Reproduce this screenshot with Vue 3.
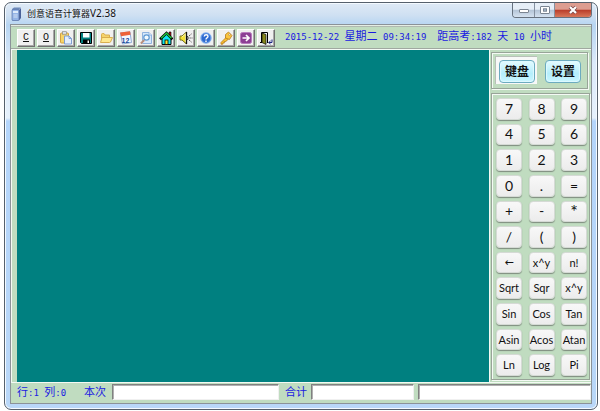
<script setup>
import { ref } from 'vue'

const tools = [
  { id: 'clear', label: 'C' },
  { id: 'zero', label: 'O' },
  { id: 'paste' }, { id: 'save' }, { id: 'open' }, { id: 'date' }, { id: 'find' },
  { id: 'home' }, { id: 'sound' }, { id: 'help' }, { id: 'key' }, { id: 'go' }, { id: 'exit' },
]

const keys = [
  '7', '8', '9', '4', '5', '6', '1', '2', '3', '0', '.', '=', '+', '-', '*', '/', '(', ')',
  '←', 'x^y', 'n!', 'Sqrt', 'Sqr', 'x^y', 'Sin', 'Cos', 'Tan', 'Asin', 'Acos', 'Atan', 'Ln', 'Log', 'Pi',
]

const tab = ref('keys')
const text = ref('')
</script>

<template>
  <div class="page">
    <main class="window">
      <header class="titlebar">
        <svg class="app-icon" viewBox="0 0 12 14">
          <path d="M2 2 4 .5h7l-2 2v11L7.500 13.500H2z" fill="#6d88b8" />
          <path d="M9 3l2-2v10l-2 2.500z" fill="#49619a" />
          <rect x="2" y="2.500" width="7" height="11" rx="1" fill="#94b4e6" stroke="#5c76aa" stroke-width=".7" />
          <rect x="3" y="4" width="5" height="2" fill="#dceafb" />
          <path d="M3.500 8h4M3.500 10h4" stroke="#d2e0f4" />
        </svg>
        <h1 class="title"><span class="cjk">创意语音计算器</span>V2.38</h1>
        <div class="winbtns">
          <button class="wb min" aria-label="最小化">
            <svg viewBox="0 0 12 10"><rect x="1.500" y="4.500" width="9" height="3" rx=".5" fill="#fff" stroke="#7b8592" /></svg>
          </button>
          <button class="wb max" aria-label="最大化">
            <svg viewBox="0 0 12 10"><rect x="1.500" y="1.500" width="9" height="7" rx=".5" fill="#fff" stroke="#7b8592" /><rect x="4.500" y="3.800" width="3" height="2.400" fill="#a9bdd1" stroke="#7b8592" /></svg>
          </button>
          <button class="wb close" aria-label="关闭">
            <svg viewBox="0 0 12 10"><path d="M3 2l6 6M9 2L3 8" stroke="#7d4a4a" stroke-width="3.800" /><path d="M3 2l6 6M9 2L3 8" stroke="#fff" stroke-width="2.200" /></svg>
          </button>
        </div>
      </header>

      <div class="client">
        <div class="toolbar">
          <button v-for="t in tools" :key="t.id" class="tool" :aria-label="t.label || t.id">
            <u v-if="t.label">{{ t.label }}</u>
            <svg v-else viewBox="0 0 14 14">
              <template v-if="t.id === 'paste'">
                <rect x="1.500" y="2" width="8" height="10" rx="1" fill="#f6d469" stroke="#d3a140" />
                <rect x="3.500" y=".7" width="4" height="2.500" fill="#dfe3ea" stroke="#8a8a85" stroke-width=".7" />
                <path d="M5.500 5h4.500L12.500 7.500v5.500h-7z" fill="#e4eefc" stroke="#7f9fd2" />
                <path d="M10 5v2.500h2.500" fill="none" stroke="#7f9fd2" />
              </template>
              <template v-else-if="t.id === 'save'">
                <path d="M1.500 1.500h11v11h-10l-1-1z" fill="#048080" stroke="#000" />
                <rect x="4" y="2" width="6.500" height="4.500" fill="#fff" />
                <rect x="4" y="8.500" width="7" height="4" fill="#000" />
                <rect x="8.500" y="9.500" width="1.500" height="2.500" fill="#fff" />
              </template>
              <template v-else-if="t.id === 'open'">
                <path d="M2.500 11V3.500q0-1 1-1H5l1 1.500h4.500V7" fill="#f5d36c" stroke="#d9ae50" />
                <path d="M1.500 11.500L3 6.500h10.500l-2 4.500q-.3.500-1 .5z" fill="#ffe88f" stroke="#d9ae50" />
              </template>
              <template v-else-if="t.id === 'date'">
                <path d="M1.500 2L11 .8l1.500 10.700-9 1.500z" fill="#f4f8fe" stroke="#8fabd6" />
                <path d="M1 1.500L11 .3l.6 3.500L2 5.200z" fill="#ee6338" />
                <text x="2.500" y="11.500" class="cal">12</text>
              </template>
              <template v-else-if="t.id === 'find'">
                <path d="M3.500 1.500H10L12.500 4v8.500h-9z" fill="#d7e8fb" stroke="#8fb2de" />
                <path d="M10 1.500V4h2.500" fill="#fff" stroke="#8fb2de" />
                <circle cx="7.500" cy="6.500" r="2.700" fill="#f3faff" stroke="#5f98d2" stroke-width="1.200" />
                <path d="M5.300 9l-3.500 3.500" stroke="#b98f7c" stroke-width="1.800" />
              </template>
              <template v-else-if="t.id === 'home'">
                <path d="M10 1h2v4h-2z" fill="#b01818" stroke="#000" stroke-width=".6" />
                <path d="M3 7v6.500h9V7L7.500 3z" fill="#10e6ee" stroke="#000" />
                <path d="M1 8.300L7.500 2 13.500 8.300" fill="none" stroke="#000" stroke-width="2.600" />
                <path d="M2 7.300L7.500 2.200l5 5.100" fill="none" stroke="#22c43a" stroke-width="1.400" />
                <rect x="6" y="9" width="3" height="4.500" fill="#ffe32d" stroke="#000" stroke-width=".8" />
              </template>
              <template v-else-if="t.id === 'sound'">
                <path d="M1 5h2L7.500 1v12L3 9H1z" fill="#f3e233" stroke="#77701c" />
                <path d="M3 6l3.500-3v8" fill="none" stroke="#fff8a8" />
                <path d="M7.500 1v12" stroke="#111" stroke-width="1.300" />
                <path d="M8.500 5q1.300 2 0 4" fill="none" stroke="#222" />
                <path d="M10 5l3-2.500M10.500 7h3M10 9l3 2.500" stroke="#555" stroke-dasharray="1.300 .7" />
              </template>
              <template v-else-if="t.id === 'help'">
                <circle cx="7" cy="7" r="6" fill="#b9d4f7" />
                <circle cx="7" cy="7" r="4.900" fill="#2d6ad0" stroke="#6b9ce6" />
                <path d="M5.200 5.500q.2-1.800 2-1.800t1.800 1.600q0 1-1 1.500T7 8.500M7 9.500V11" fill="none" stroke="#fff" stroke-width="1.400" />
              </template>
              <template v-else-if="t.id === 'key'">
                <path d="M7.500 6L2 11.500v1.700h1.800V12h1.500v-1.500h1.500L9.500 8" fill="#f9c02f" stroke="#b5781a" stroke-width=".8" />
                <path d="M6.500 3.500L9.500 1l3.500 3.500-2.500 4-4-1.500z" fill="#fbc63e" stroke="#b5781a" stroke-width=".8" stroke-linejoin="round" />
                <circle cx="10.500" cy="3.700" r=".9" fill="#fff" stroke="#a66c10" stroke-width=".5" />
              </template>
              <template v-else-if="t.id === 'go'">
                <rect x="1.500" y="1.500" width="11" height="11" rx="2" fill="#8c3f94" stroke="#b87abd" />
                <path d="M3.500 7h6M7 4l3 3-3 3" fill="none" stroke="#fff" stroke-width="1.700" />
              </template>
              <template v-else>
                <path d="M2.500 11.500v-10h6v10" fill="#fff" stroke="#000" />
                <path d="M3 2l4 1.500V13.500L3 11.500z" fill="#87871c" stroke="#000" stroke-width=".7" />
                <path d="M1 11.500h2M8 11.500h1.500" stroke="#000" />
                <path d="M13 8.500v3h-3M11.500 10l-1.700 1.600 1.700 1.400" fill="none" stroke="#1b2483" />
              </template>
            </svg>
          </button>
          <p class="info mono">2015-12-22 <b>星期二</b> 09:34:19&nbsp; <b>距高考</b>:182 <b>天</b> 10 <b>小时</b></p>
        </div>

        <div class="middle">
          <textarea v-model="text" class="screen" aria-label="计算区" spellcheck="false"></textarea>
          <aside class="side">
            <nav class="modes groove">
              <span class="mode-wrap" :class="{ on: tab === 'keys' }">
                <button class="mode" @click="tab = 'keys'">键盘</button>
              </span>
              <span class="mode-wrap" :class="{ on: tab === 'setup' }">
                <button class="mode" @click="tab = 'setup'">设置</button>
              </span>
            </nav>
            <div class="keypad groove">
              <button
                v-for="(k, i) in keys"
                :key="i"
                class="key"
                :class="{ small: i > 18, arrow: k === '←', star: k === '*' }"
                @click="text += k"
              >{{ k }}</button>
            </div>
          </aside>
        </div>

        <footer class="status mono">
          <span class="pos"><b>行</b>:1 <b>列</b>:0</span>
          <label for="current"><b>本次</b></label>
          <input id="current" class="field current" type="text">
          <label for="total"><b>合计</b></label>
          <input id="total" class="field total" type="text">
          <input class="field note" type="text" aria-label="备注">
        </footer>
      </div>
    </main>
  </div>
</template>

<style>
body {
  margin: 0;
  background: #fff;
}
</style>

<style scoped>
* {
  box-sizing: border-box;
}

.page {
  display: flex;
  min-height: 100vh;
  padding: 2px 2px 1px 4px;
  font-family: "Noto Sans", "Noto Sans CJK SC", sans-serif;
}

.window {
  flex: 1;
  display: flex;
  flex-direction: column;
  padding: 0 5px 5px;
  border: 1px solid #56606c;
  border-radius: 7px;
  background: linear-gradient(#dfeaf6 0, #cfe0f2 12px, #b7d5f2 22px, #dceafa 60px, #e6f1fc 115px, #b4d5fb 118px, #b9d7f8 100%);
  box-shadow: inset 0 0 0 1px #f4faff;
}

.titlebar {
  display: flex;
  align-items: flex-start;
  height: 21px;
}

.app-icon {
  width: 12px;
  height: 14px;
  margin: 4px 5px 0 0;
}

.title {
  flex: 1;
  margin: 2px 0 0;
  font-size: 10px;
  line-height: 17px;
  font-weight: 400;
  color: #111;
  text-shadow: 0 0 4px #fff;
}

.cjk {
  font-size: 9px;
}

.winbtns {
  display: flex;
  height: 15px;
  border: 1px solid #66717e;
  border-top: 0;
  border-radius: 0 0 4px 4px;
  overflow: hidden;
}

.wb {
  display: flex;
  align-items: center;
  justify-content: center;
  width: 20px;
  padding: 0;
  border: 0;
  border-right: 1px solid #8490a0;
  background: linear-gradient(#e6eef7 45%, #b4c4d7 50%, #d5e2f0);
}

.wb svg {
  width: 12px;
  height: 10px;
}

.wb.min {
  width: 22px;
}

.wb.close {
  width: 36px;
  border-right: 0;
  background: linear-gradient(#dd9d90 45%, #b93c29 50%, #d9785a);
}

.client {
  flex: 1;
  display: flex;
  flex-direction: column;
  border: 1px solid #8b9298;
  background: #c0dcc0;
}

.toolbar {
  display: flex;
  align-items: center;
  gap: 2px;
  height: 24px;
  padding: 1px 6px 0;
  border-top: 1px solid #e4eee4;
  border-bottom: 1px solid #a0a8a0;
  box-shadow: inset 0 1px #b0b8b0;
}

.tool {
  display: flex;
  align-items: center;
  justify-content: center;
  width: 18px;
  height: 18px;
  padding: 0;
  border: 1px solid;
  border-color: #fff #707070 #707070 #fff;
  background: #f0f0f0;
  box-shadow: inset -1px -1px #a8a8a8;
  font: 10px "Liberation Mono", monospace;
  color: #111;
}

.tool svg {
  width: 14px;
  height: 14px;
}

.cal {
  font: bold 7px "Liberation Sans", sans-serif;
  fill: #174a9c;
}

.mono {
  font-family: "DejaVu Sans Mono", "Noto Sans CJK SC", monospace;
  font-size: 9px;
  line-height: 16px;
  color: #1a1ae0;
}

.mono b {
  font-family: "Noto Sans CJK SC", sans-serif;
  font-size: 11px;
  font-weight: 400;
}

.info {
  margin: 0 0 4px 8px;
  white-space: nowrap;
}

.middle {
  flex: 1;
  display: flex;
  padding-left: 6px;
  border-top: 1px solid #f4faf4;
  box-shadow: inset 1px 0 #f4faf4;
}

.screen {
  flex: 1;
  min-width: 0;
  padding: 4px;
  border: 0;
  outline: 0;
  resize: none;
  background: #008080;
  color: #fff;
}

.side {
  display: flex;
  flex-direction: column;
  gap: 4px;
  width: 102px;
  padding: 2px 1px;
  border-left: 1px solid #f4faf4;
}

.groove {
  border: 1px solid #98a498;
  box-shadow: inset 1px 1px #f4faf4, 1px 1px #f4faf4;
}

.modes {
  display: flex;
  gap: 4px;
  height: 37px;
  margin-right: 2px;
  padding: 3px;
}

.mode-wrap {
  width: 42px;
  height: 28px;
  padding: 3px 2px 2px 4px;
}

.mode-wrap.on {
  background: #f8f8f8;
  box-shadow: inset 1px 1px #b8c0b8;
}

.mode {
  width: 36px;
  height: 23px;
  padding: 0;
  border: 1px solid #6cabbf;
  border-radius: 4px;
  background: linear-gradient(#e4fbff, #b4eefb 60%, #c9f6ff);
  box-shadow: inset 0 0 1px 1px #dffaff;
  font: bold 12px/18px "Noto Sans CJK SC", sans-serif;
  color: #111;
}

.keypad {
  flex: 1;
  display: grid;
  grid-template-columns: repeat(3, 26px);
  grid-auto-rows: 1fr;
  justify-content: space-between;
  gap: 4px;
  padding: 4px 2px 3px 4px;
}

.key {
  min-width: 0;
  padding: 0;
  border: 1px solid #d5dad5;
  border-radius: 4px;
  background: linear-gradient(#f8f8f8, #ececec);
  box-shadow: 0 1px 1px #7f8c7f;
  font: 14px/18px Lato, "DejaVu Sans", sans-serif;
  color: #111;
  white-space: nowrap;
}

.key.small,
.key.arrow {
  font-size: 11px;
}

.key.arrow {
  font-family: "DejaVu Sans", sans-serif;
}

.key.star {
  font-size: 18px;
}

.status {
  display: flex;
  align-items: center;
  height: 21px;
  padding: 0 0 2px 6px;
  border-top: 1px solid #f4faf4;
}

.pos {
  margin-right: 18px;
}

.field {
  height: 16px;
  padding: 0 2px;
  border: 1px solid;
  border-color: #808080 #f0f0f0 #f0f0f0 #808080;
  outline: 0;
  background: #fff;
  box-shadow: inset 1px 1px #b0b0b0;
  font-size: 10px;
}

.current {
  width: 167px;
  margin: 0 6px;
}

.total {
  width: 103px;
  margin: 0 4px;
}

.note {
  flex: 1;
  min-width: 0;
}
</style>
